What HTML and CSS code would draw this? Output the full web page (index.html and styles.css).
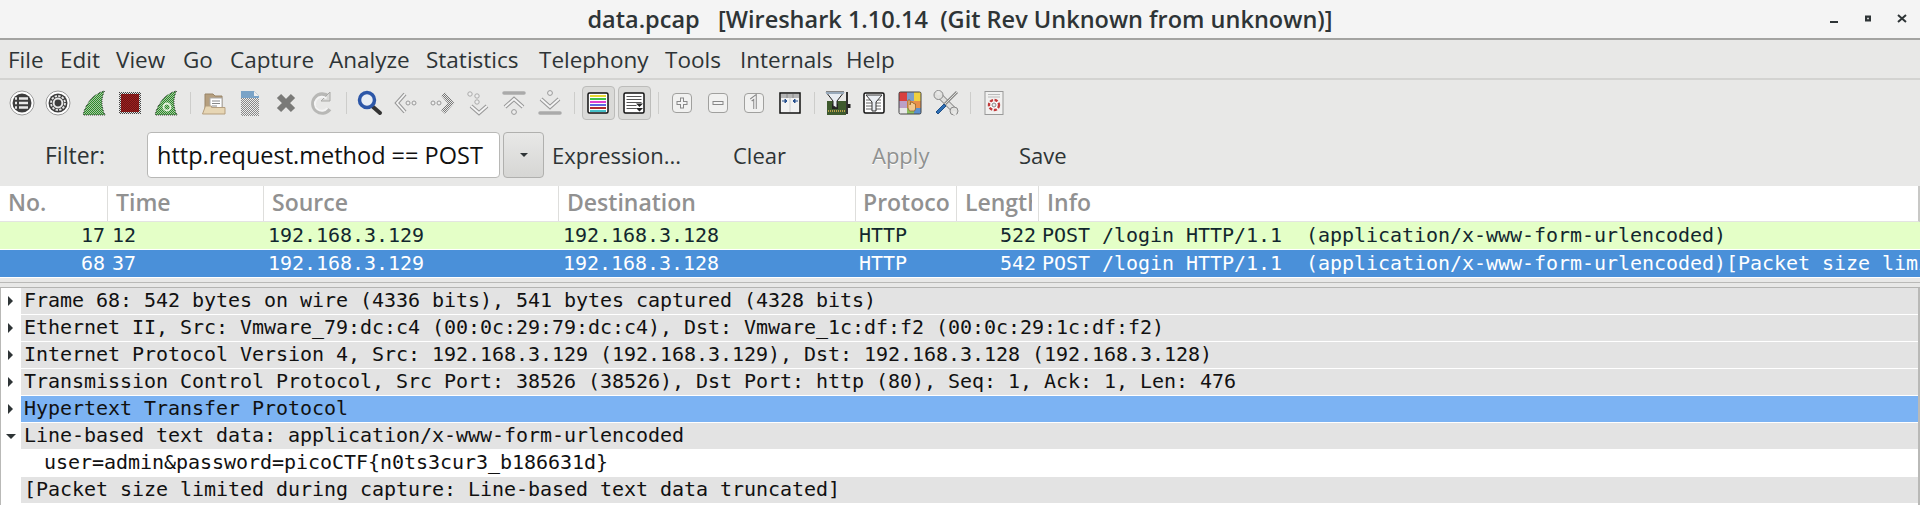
FILE: index.html
```html
<!DOCTYPE html>
<html lang="en">
<head>
<meta charset="utf-8">
<title>data.pcap [Wireshark 1.10.14 (Git Rev Unknown from unknown)]</title>
<link rel="stylesheet" href="styles.css">
</head>
<body>
<svg class="defs" aria-hidden="true">
  <defs>
    <pattern id="dg" width="2" height="2" patternUnits="userSpaceOnUse"><rect width="2" height="2" fill="#2a8a2a"/><rect width="1" height="1" fill="#a9c8a2"/><rect x="1" y="1" width="1" height="1" fill="#a9c8a2"/></pattern>
    <pattern id="dr" width="2" height="2" patternUnits="userSpaceOnUse"><rect width="2" height="2" fill="#9c2020"/><rect width="1" height="1" fill="#6e1414"/><rect x="1" y="1" width="1" height="1" fill="#6e1414"/></pattern>
    <pattern id="dk" width="2" height="2" patternUnits="userSpaceOnUse"><rect width="1" height="1" fill="#444"/><rect x="1" y="1" width="1" height="1" fill="#444"/></pattern>
    <pattern id="dl" width="2" height="2" patternUnits="userSpaceOnUse"><rect width="1" height="1" fill="#777"/><rect x="1" y="1" width="1" height="1" fill="#777"/></pattern>
    <pattern id="da" width="2" height="2" patternUnits="userSpaceOnUse"><rect width="2" height="2" fill="#eee"/><rect width="1" height="1" fill="#888"/><rect x="1" y="1" width="1" height="1" fill="#888"/></pattern>
  </defs>
</svg>

<header class="titlebar">
  <span class="title">data.pcap   [Wireshark 1.10.14  (Git Rev Unknown from unknown)]</span>
  <span class="wm">
    <svg class="wm-ic" viewBox="0 0 10 10"><rect x="1" y="7" width="8" height="2" fill="#2e3436"/></svg>
    <svg class="wm-ic" viewBox="0 0 10 10"><path d="M2 1.500h6v6h-6z M4.200 3.700v1.600h1.600v-1.600z" fill="#2e3436" fill-rule="evenodd"/></svg>
    <svg class="wm-ic" viewBox="0 0 10 10"><path d="M1 1l8 7M9 1l-8 7" stroke="#2e3436" stroke-width="2" fill="none"/></svg>
  </span>
</header>

<nav class="menubar">
  <span class="m m-file">File</span><span class="m m-edit">Edit</span><span class="m m-view">View</span><span class="m m-go">Go</span><span class="m m-capture">Capture</span><span class="m m-analyze">Analyze</span><span class="m m-stats">Statistics</span><span class="m m-tel">Telephony</span><span class="m m-tools">Tools</span><span class="m m-int">Internals</span><span class="m">Help</span>
</nav>

<div class="toolbar">
  <span class="tb"><svg class="ic" viewBox="0 0 26 26"><circle cx="13" cy="13" r="12" fill="#fff" stroke="#999"/><circle cx="13" cy="13" r="9.500" fill="#3d3d3d"/><path d="M10 8.500h9M10 13h9M10 17.500h9" stroke="#e8e8e8" stroke-width="2.600"/><path d="M6 8.500h2M6 13h2M6 17.500h2" stroke="#e8e8e8" stroke-width="2.600"/></svg></span>
  <span class="tb"><svg class="ic" viewBox="0 0 26 26"><circle cx="13" cy="13" r="12" fill="#fff" stroke="#999"/><circle cx="13" cy="13" r="9.500" fill="#3d3d3d"/><circle cx="13" cy="13" r="7" fill="none" stroke="#e8e8e8" stroke-width="1.800" stroke-dasharray="2.400 1.270"/><circle cx="13" cy="13" r="4.400" fill="#3d3d3d" stroke="#e8e8e8" stroke-width="2"/></svg></span>
  <span class="tb"><svg class="ic" viewBox="0 0 26 26"><path d="M23.500 1C14 3 5 12 2 25h22C20 17 20 8 23.500 1z" fill="url(#dg)" stroke="url(#dk)"/></svg></span>
  <span class="tb"><svg class="ic" viewBox="0 0 26 26"><rect x="2" y="2" width="22" height="22" fill="url(#dk)"/><rect x="4" y="4" width="18" height="18" fill="url(#dr)"/></svg></span>
  <span class="tb"><svg class="ic" viewBox="0 0 26 26"><path d="M23.500 1C14 3 5 12 2 25h22C20 17 20 8 23.500 1z" fill="url(#dg)" stroke="url(#dk)"/><circle cx="14" cy="17" r="3.500" fill="none" stroke="#e4f2dc" stroke-width="1.800"/></svg></span>
  <span class="sep"></span>
  <span class="tb"><svg class="ic" viewBox="0 0 26 26"><path d="M4 4h8l2 2h7v16H4z" fill="#b59f7f" stroke="#998466"/><rect x="9" y="8" width="12" height="10" fill="#fff" stroke="#aaa"/><path d="M11 11h8M11 13.500h8M11 16h5" stroke="#888"/><path d="M1.500 24l3-8h6v1.500h13.500v6.500z" fill="#e7d6b4" stroke="#b59f7f"/></svg></span>
  <span class="tb"><svg class="ic" viewBox="0 0 26 26"><path d="M4 1h13l5 5v20H4z" fill="url(#da)"/><path d="M4 1h13l5 5v2H4z" fill="#7aa3c7"/><path d="M17 1v5h5z" fill="#eee"/></svg></span>
  <span class="tb"><svg class="ic" viewBox="0 0 26 26"><path d="M6 6l14 14M20 6L6 20" stroke="#7a7a78" stroke-width="6"/></svg></span>
  <span class="tb"><svg class="ic" viewBox="0 0 26 26"><path d="M20.500 19a9 9 0 1 1-1-12" fill="none" stroke="#b8b8b6" stroke-width="4.500"/><path d="M21 2v9h-9z" fill="#d8d8d6" stroke="#a8a8a6"/><path d="M18.500 18a7 7 0 1 1-1-9.500" fill="none" stroke="#f4f4f4" stroke-width="2"/></svg></span>
  <span class="sep"></span>
  <span class="tb"><svg class="ic" viewBox="0 0 26 26"><path d="M15 16l8 7" stroke="#333" stroke-width="4" stroke-linecap="round"/><circle cx="10" cy="10" r="7.500" fill="#e8edf4" stroke="#2d57a8" stroke-width="3.500"/></svg></span>
  <span class="tb"><svg class="ic" viewBox="0 0 26 26"><path d="M12 4l-8 9 8 9" fill="none" stroke="#999" stroke-width="4"/><path d="M12 4l-8 9 8 9" fill="none" stroke="#f4f4f4" stroke-width="1.800"/><circle cx="15" cy="13" r="2" fill="#eee" stroke="#999"/><circle cx="21" cy="13" r="2" fill="#eee" stroke="#999"/></svg></span>
  <span class="tb"><svg class="ic" viewBox="0 0 26 26"><circle cx="4" cy="13" r="2" fill="#eee" stroke="#999"/><circle cx="10" cy="13" r="2" fill="#eee" stroke="#999"/><path d="M14 4l8 9-8 9" fill="none" stroke="url(#dl)" stroke-width="5"/></svg></span>
  <span class="tb"><svg class="ic" viewBox="0 0 26 26"><circle cx="5" cy="4" r="2.200" fill="#eee" stroke="#aaa"/><circle cx="12" cy="6" r="2.200" fill="#eee" stroke="#aaa"/><circle cx="12" cy="12" r="2.200" fill="#eee" stroke="#aaa"/><path d="M6 16l8 7 8-7" fill="none" stroke="#999" stroke-width="4"/><path d="M6 16l8 7 8-7" fill="none" stroke="#f4f4f4" stroke-width="1.800"/></svg></span>
  <span class="tb"><svg class="ic" viewBox="0 0 26 26"><path d="M3 3h20" stroke="#aaa" stroke-width="3.500" stroke-linecap="round"/><path d="M4 17l9-8 9 8" fill="none" stroke="#999" stroke-width="4"/><path d="M4 17l9-8 9 8" fill="none" stroke="#f4f4f4" stroke-width="1.800"/><circle cx="13" cy="22" r="2.400" fill="#eee" stroke="#999"/></svg></span>
  <span class="tb"><svg class="ic" viewBox="0 0 26 26"><circle cx="13" cy="3" r="2.400" fill="#eee" stroke="#999"/><path d="M4 9l9 8 9-8" fill="none" stroke="#999" stroke-width="4"/><path d="M4 9l9 8 9-8" fill="none" stroke="#f4f4f4" stroke-width="1.800"/><path d="M3 23h20" stroke="#aaa" stroke-width="3.500" stroke-linecap="round"/></svg></span>
  <span class="sep"></span>
  <span class="tb"><span class="tg"><svg class="ic ic-s" viewBox="0 0 22 22"><rect x="1" y="1" width="20" height="20" rx="1.500" fill="#fff" stroke="#111" stroke-width="1.500"/><path d="M3 4h16" stroke="#e8d830" stroke-width="2"/><path d="M3 7h16" stroke="#3fc04a" stroke-width="2"/><path d="M3 10h16" stroke="#e040d0" stroke-width="2"/><path d="M3 13h16" stroke="#5a6ae0" stroke-width="2"/><path d="M3 16h16" stroke="#b02a30" stroke-width="2"/><path d="M3 19h16" stroke="#45c0c8" stroke-width="2"/></svg></span></span>
  <span class="tb"><span class="tg"><svg class="ic ic-s" viewBox="0 0 22 22"><rect x="1" y="1" width="20" height="20" rx="1.500" fill="#fff" stroke="#111" stroke-width="1.500"/><path d="M3.500 4.500h15M3.500 7.500h15M3.500 10.500h15M3.500 13.500h10M3.500 16.500h10" stroke="#555"/><path d="M13 11.500h7l-3.500 3.500zM13 16h7l-3.500 3.500z" fill="#222"/></svg></span></span>
  <span class="sep"></span>
  <span class="tb"><svg class="ic" viewBox="0 0 26 26"><g transform="translate(1,1)"><rect x="2.500" y="2.500" width="19" height="19" rx="3.500" fill="#f1f1f0" stroke="#a0a09e"/><path d="M12 6.500v11M6.500 12h11" stroke="#888" stroke-width="4"/><path d="M12 7.500v9M7.500 12h9" stroke="#f4f4f4" stroke-width="2"/></g></svg></span>
  <span class="tb"><svg class="ic" viewBox="0 0 26 26"><g transform="translate(1,1)"><rect x="2.500" y="2.500" width="19" height="19" rx="3.500" fill="#f1f1f0" stroke="#a0a09e"/><path d="M6.500 12h11" stroke="#888" stroke-width="4"/><path d="M7.500 12h9" stroke="#f4f4f4" stroke-width="2"/></g></svg></span>
  <span class="tb"><svg class="ic" viewBox="0 0 26 26"><g transform="translate(1,1)"><rect x="2.500" y="2.500" width="19" height="19" rx="3.500" fill="#f1f1f0" stroke="#a0a09e"/><path d="M9 9l4-3v12" fill="none" stroke="#888" stroke-width="3.500"/><path d="M9 9l4-3v12" fill="none" stroke="#f4f4f4" stroke-width="1.500"/></g></svg></span>
  <span class="tb"><svg class="ic ic-s" viewBox="0 0 22 22"><rect x="1" y="1" width="20" height="20" fill="#f2f2f2" stroke="#111" stroke-width="1.500"/><path d="M2 2h18v4H2z" fill="#b5b5b5"/><path d="M8 2v4M14 2v4" stroke="#888"/><path d="M11 6v14" stroke="#ccc"/><path d="M3 9h5M8 9l-2-2v4zM19 9h-5M14 9l2-2v4z" stroke="#27508f" fill="#27508f"/></svg></span>
  <span class="sep"></span>
  <span class="tb"><svg class="ic ic-w" viewBox="0 0 28 26"><path d="M3 11h19v14H3z" fill="#3e5a2e"/><path d="M4 21h17" stroke="#b9a04a" stroke-width="2" stroke-dasharray="1 1"/><rect x="8" y="14" width="6" height="5" fill="#222"/><path d="M23 2v22" stroke="#333" stroke-width="2"/><path d="M25 14v4" stroke="#222" stroke-width="3"/><path d="M2 2h18l-7 9v7l-4-2v-5z" fill="#e9edf2" stroke="#222"/><path d="M2 2h18v2H2z" fill="#9ab"/></svg></span>
  <span class="tb"><svg class="ic ic-s" viewBox="0 0 22 22"><rect x="1" y="1" width="20" height="20" rx="1.500" fill="#fff" stroke="#111" stroke-width="1.500"/><path d="M3 8h15M3 11h15M3 14h15M3 17h15" stroke="#666"/><path d="M3 3h16l-6 7v9h-4v-9z" fill="#e9edf2" stroke="#333"/></svg></span>
  <span class="tb"><svg class="ic" viewBox="0 0 26 26"><rect x="2" y="2" width="8" height="9" fill="#d84040"/><rect x="10" y="2" width="7" height="9" fill="#7c9dcb"/><rect x="17" y="2" width="7" height="9" fill="#f0d040"/><rect x="2" y="11" width="8" height="7" fill="#bca0c8"/><rect x="10" y="11" width="7" height="7" fill="#e8904a"/><rect x="17" y="11" width="7" height="7" fill="#e8904a"/><rect x="2" y="18" width="8" height="6" fill="#e8e8e8"/><rect x="10" y="18" width="7" height="6" fill="#8cc060"/><rect x="17" y="18" width="7" height="6" fill="#5a90d0"/><rect x="2" y="2" width="22" height="22" rx="1.500" fill="none" stroke="#444"/><path d="M11 18V10h2v5l1-3 2 .5.500 1 2 .5v5l-1 2h-5z" fill="#f2c890" stroke="#8a5a20" stroke-width=".7"/></svg></span>
  <span class="tb"><svg class="ic" viewBox="0 0 26 26"><path d="M6 5l15 15" stroke="#888" stroke-width="6"/><path d="M6 5l15 15" stroke="#e0e0de" stroke-width="4"/><circle cx="5.500" cy="5" r="4.500" fill="#e0e0de" stroke="#888"/><circle cx="21" cy="21" r="4" fill="#e0e0de" stroke="#888"/><path d="M5 1l1 4M22 25l-1-4" stroke="#e8e8e7" stroke-width="3"/><path d="M24 2l-12 12" stroke="#8a8a88" stroke-width="3"/><path d="M24 2l-12 12" stroke="#dcdcda"/><path d="M11 14l-8 8 2 2 8-8z" fill="#2e6fb5" stroke="#1f4f86"/></svg></span>
  <span class="sep"></span>
  <span class="tb"><svg class="ic" viewBox="0 0 26 26"><rect x="4" y="1.500" width="18" height="23" fill="#f1f1f0" stroke="#999"/><path d="M7 4.500h12M7 7h12" stroke="#bbb"/><circle cx="13" cy="15" r="5" fill="#fff" stroke="#c23a3a" stroke-width="2.400" stroke-dasharray="3.200 1.500"/><circle cx="13" cy="15" r="2" fill="#eee" stroke="#888"/></svg></span>
</div>

<div class="filterbar">
  <span class="f-label">Filter:</span>
  <span class="f-input">http.request.method == POST</span>
  <span class="f-drop"><span class="caret"></span></span>
  <span class="f-btn f-expr">Expression...</span>
  <span class="f-btn f-clear">Clear</span>
  <span class="f-btn f-apply">Apply</span>
  <span class="f-btn">Save</span>
</div>

<div class="plist">
  <div class="row head">
    <span>No.</span><span>Time</span><span>Source</span><span>Destination</span><span><em class="hc">Protocol</em></span><span><em class="hc">Length</em></span><span>Info</span>
  </div>
  <div class="row pkt pkt-green">
    <span class="r">17</span><span>12</span><span>192.168.3.129</span><span>192.168.3.128</span><span>HTTP</span><span class="r">522</span><span>POST /login HTTP/1.1  (application/x-www-form-urlencoded)</span>
  </div>
  <div class="row pkt pkt-sel">
    <span class="r">68</span><span>37</span><span>192.168.3.129</span><span>192.168.3.128</span><span>HTTP</span><span class="r">542</span><span>POST /login HTTP/1.1  (application/x-www-form-urlencoded)[Packet size limited during capture]</span>
  </div>
</div>

<div class="handle"></div>

<div class="tree">
  <div class="node"><span class="tw"><i class="ar"></i></span><span class="lab">Frame 68: 542 bytes on wire (4336 bits), 541 bytes captured (4328 bits)</span></div>
  <div class="node"><span class="tw"><i class="ar"></i></span><span class="lab">Ethernet II, Src: Vmware_79:dc:c4 (00:0c:29:79:dc:c4), Dst: Vmware_1c:df:f2 (00:0c:29:1c:df:f2)</span></div>
  <div class="node"><span class="tw"><i class="ar"></i></span><span class="lab">Internet Protocol Version 4, Src: 192.168.3.129 (192.168.3.129), Dst: 192.168.3.128 (192.168.3.128)</span></div>
  <div class="node"><span class="tw"><i class="ar"></i></span><span class="lab">Transmission Control Protocol, Src Port: 38526 (38526), Dst Port: http (80), Seq: 1, Ack: 1, Len: 476</span></div>
  <div class="node"><span class="tw"><i class="ar"></i></span><span class="lab lab-sel">Hypertext Transfer Protocol</span></div>
  <div class="node"><span class="tw"><i class="ad"></i></span><span class="lab">Line-based text data: application/x-www-form-urlencoded</span></div>
  <div class="node"><span class="tw"></span><span class="lab lab-child">user=admin&amp;password=picoCTF{n0ts3cur3_b186631d}</span></div>
  <div class="node"><span class="tw"></span><span class="lab">[Packet size limited during capture: Line-based text data truncated]</span></div>
</div>
</body>
</html>
```

FILE: styles.css
```css
* { box-sizing: border-box; }
html, body { margin: 0; padding: 0; }
body {
  width: 1920px; height: 505px; overflow: hidden;
  background: #e8e8e7; color: #2e3436;
  font-family: "Open Sans", "Noto Sans", sans-serif;
}
.defs { display: block; width: 0; height: 0; }

.titlebar {
  height: 40px; background: #f4f4f4; border-bottom: 2px solid #a3a3a1;
  display: flex; align-items: center; position: relative;
}
.title {
  flex: 1; text-align: center; white-space: pre;
  font-size: 23.500px; font-weight: 600; color: #2e3436;
}
.wm { position: absolute; right: 13px; top: 14px; display: flex; gap: 24px; }
.wm-ic { width: 10px; height: 10px; display: block; }

.menubar {
  height: 40px; border-bottom: 2px solid #d3d3d1;
  display: flex; align-items: center; padding-left: 8px;
  font-size: 22.500px; white-space: pre; color: #2e3436;
}
.m { display: block; }
.m-file { width: 52px; }
.m-edit { width: 56px; }
.m-view { width: 67px; }
.m-go { width: 47px; }
.m-capture { width: 99px; }
.m-analyze { width: 97px; }
.m-stats { width: 113px; }
.m-tel { width: 126px; }
.m-tools { width: 75px; }
.m-int { width: 106px; }

.toolbar {
  height: 46px; display: flex; align-items: center; padding-left: 4px;
}
.tb { width: 36px; height: 36px; display: flex; align-items: center; justify-content: center; flex: none; }
.sep { width: 12px; flex: none; height: 22px; display: flex; justify-content: center; }
.sep::before { content: ""; display: block; width: 1px; background: #cdcdcb; }
.ic { width: 26px; height: 26px; display: block; }
.ic-s { width: 22px; height: 22px; }
.ic-w { width: 28px; }
.tg {
  width: 33px; height: 34px; border: 1px solid #bcbcba; border-radius: 4px;
  background: #dadad8; display: flex; align-items: center; justify-content: center;
}

.filterbar {
  height: 60px; display: flex; align-items: flex-start; padding-top: 6px;
  font-size: 22px; color: #2e3436;
}
.f-label { width: 147px; padding-left: 45px; line-height: 46px; font-size: 23px; }
.f-input {
  width: 353px; height: 46px; background: #fff; border: 1px solid #b8b8b6; border-radius: 4px;
  padding-left: 9px; line-height: 44px; color: #111; font-size: 23.500px;
}
.f-drop {
  width: 41px; height: 46px; margin-left: 3px; border: 1px solid #b0b0ae; border-radius: 4px;
  background: linear-gradient(#e8e8e7, #d6d6d4);
  display: flex; align-items: center; justify-content: center;
}
.caret { width: 0; height: 0; border-left: 4px solid transparent; border-right: 4px solid transparent; border-top: 4px solid #2e3436; }
.f-btn { line-height: 46px; white-space: nowrap; }
.f-expr { margin-left: 8px; width: 181px; }
.f-clear { width: 139px; }
.f-apply { width: 147px; color: #8f9190; text-shadow: 0 1px #fff; }

.row {
  display: grid;
  grid-template-columns: 108px 156px 295px 297px 101px 82px 1fr;
}
.row > span { overflow: hidden; white-space: pre; }
.head {
  height: 36px; background: #fff; color: #919191;
  font-size: 23px; font-weight: 600; line-height: 32px;
  border-bottom: 1px solid #e4e4e2; border-right: 2px solid #c8c8c6;
}
.head > span { padding-left: 8px; border-right: 1px solid #dededc; }
.head > span:nth-child(5) { padding-left: 7px; }
.head > span:last-child { border-right: 0; }
.hc { display: block; overflow: hidden; font-style: normal; margin-right: 6px; }
.pkt {
  font-family: "DejaVu Sans Mono", monospace; font-size: 20px; letter-spacing: -0.04px;
  height: 28px; line-height: 26px; border-bottom: 1px solid #fff;
}
.pkt > span { padding-left: 4px; }
.pkt > span:nth-child(5) { padding-left: 3px; }
.pkt > span:last-child { padding-left: 3px; }
.pkt > .r { padding-left: 0; padding-right: 3px; text-align: right; }
.pkt-green { background: #e4ffc7; color: #12272e; }
.pkt-sel { background: #4a90d9; color: #fff; }

.handle {
  height: 10px; background: #e8e8e7;
  border-bottom: 1px solid #b4b4b2;
  background-image: linear-gradient(#e8e8e7 4px, #b9b9b7 4px, #b9b9b7 5px, #e8e8e7 5px);
}

.tree {
  background: #fff; height: 217px; border-left: 1px solid #b9b9b7; border-right: 2px solid #b9b9b7;
  font-family: "DejaVu Sans Mono", monospace; font-size: 20px; letter-spacing: -0.04px; color: #111;
}
.node { display: flex; height: 27px; }
.tw { width: 20px; flex: none; display: flex; align-items: center; justify-content: center; height: 26px; }
.ar { display: block; width: 0; height: 0; border-top: 5px solid transparent; border-bottom: 5px solid transparent; border-left: 5px solid #2e3436; margin-left: -1px; }
.ad { display: block; width: 0; height: 0; border-left: 5px solid transparent; border-right: 5px solid transparent; border-top: 5px solid #2e3436; }
.lab { flex: 1; height: 26px; line-height: 24px; background: #e3e3e3; padding-left: 3px; white-space: pre; }
.lab-sel { background: #7cb3f3; }
.lab-child { background: #fff; padding-left: 23px; }
```
